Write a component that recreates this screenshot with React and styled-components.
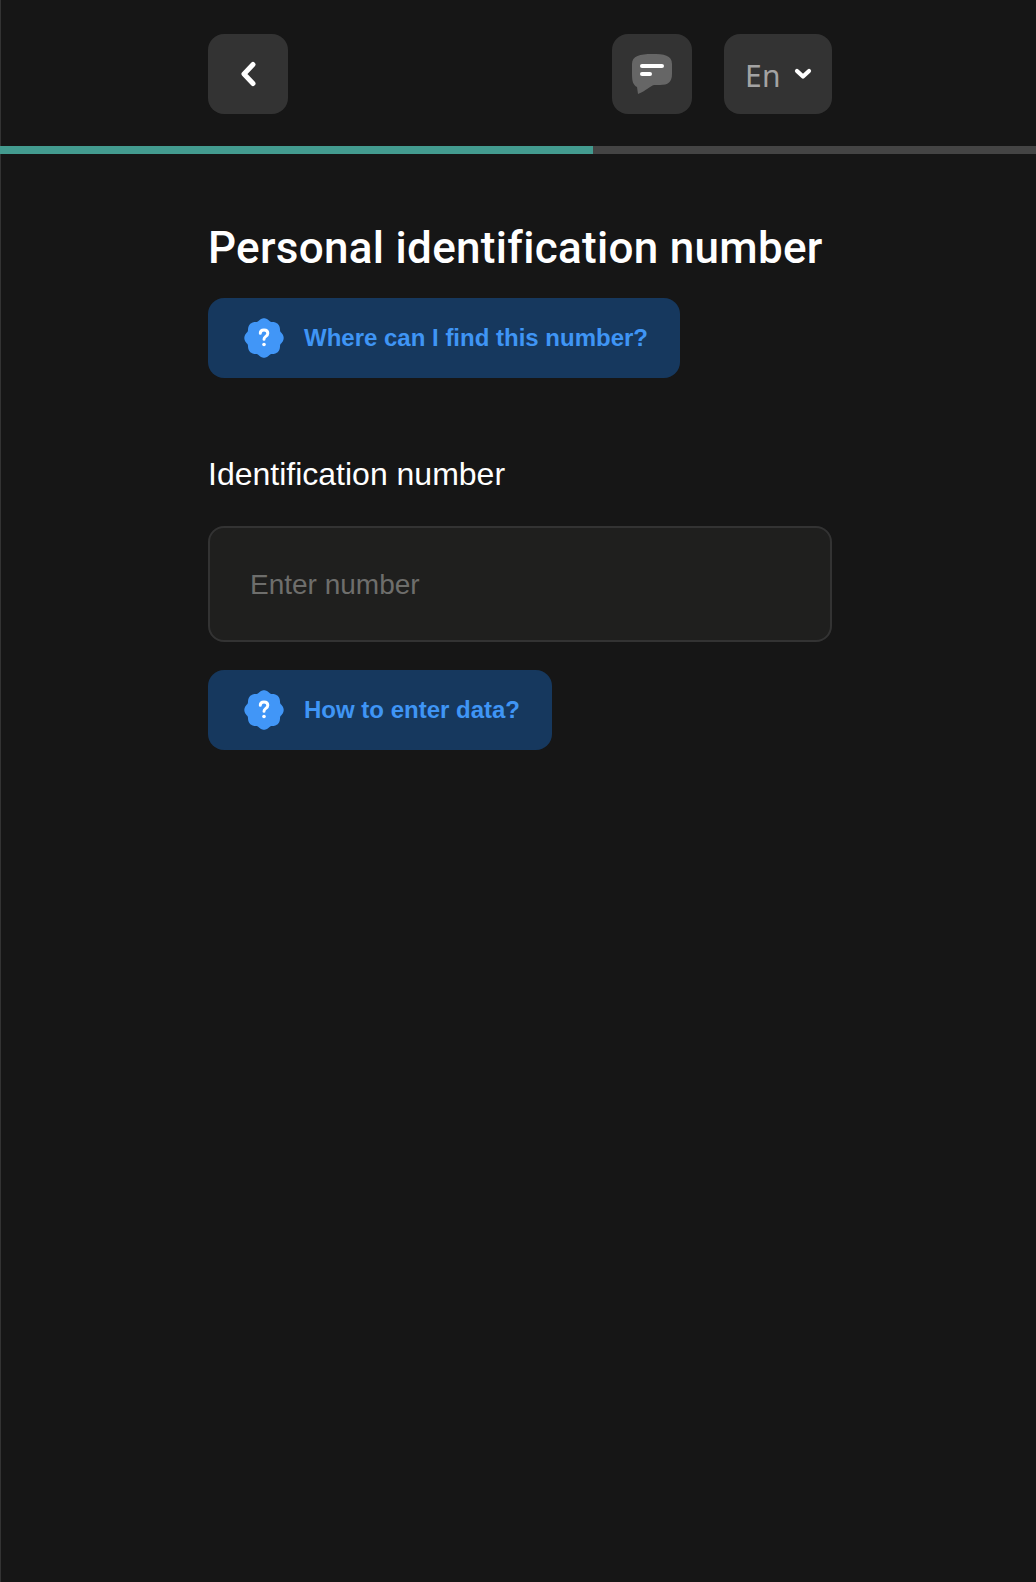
import React from "react";
import styled, { createGlobalStyle } from "styled-components";

const Global = createGlobalStyle`
  html, body { margin: 0; padding: 0; background: #161616; }
  #root { min-height: 1582px; }
  input::placeholder { color: #6e6e6c; opacity: 1; }
`;

const Page = styled.div`
  min-height: 1582px;
  box-sizing: border-box;
  background: #161616;
  border-left: 1px solid #333;
  display: flex;
  flex-direction: column;
`;
const Header = styled.header`
  width: 624px;
  margin-left: 207px;
  padding-top: 34px;
  display: flex;
  align-items: center;
  gap: 32px;
`;
const IconButton = styled.button`
  width: 80px;
  height: 80px;
  border: 0;
  padding: 0;
  border-radius: 16px;
  background: #333333;
  display: flex;
  align-items: center;
  justify-content: center;
`;
const Spacer = styled.div`
  flex: 1;
`;
const LangButton = styled(IconButton)`
  width: 108px;
  gap: 13px;
  padding-left: 1px;
  color: #a3a3a3;
  font-family: "Noto Sans", sans-serif;
  font-size: 30px;
  line-height: 1;
`;
const LangText = styled.span`
  padding-top: 4px;
  letter-spacing: 0.4px;
`;
const Progress = styled.div`
  margin: 32px 0 0 -1px;
  height: 8px;
  background: #444444;
`;
const ProgressFill = styled.div`
  height: 100%;
  background: #439b8f;
`;
const Main = styled.main`
  width: 624px;
  margin-left: 207px;
  display: flex;
  flex-direction: column;
  align-items: flex-start;
`;
const Title = styled.h1`
  margin: 66px 0 0;
  font-family: Roboto, "Noto Sans", sans-serif;
  font-weight: 500;
  font-size: 44px;
  letter-spacing: 0.3px;
  line-height: 56px;
  color: #fff;
  white-space: nowrap;
`;
const Hint = styled.button`
  margin-top: ${(p) => p.$top}px;
  height: 80px;
  border: 0;
  border-radius: 16px;
  background: #16385e;
  padding: 0 32px 0 36px;
  display: flex;
  align-items: center;
  gap: 20px;
  color: #3f95f5;
  font-family: "Liberation Sans", Arial, sans-serif;
  font-weight: 700;
  font-size: 24px;
`;
const Label = styled.label`
  margin-top: 76px;
  font-family: "Liberation Sans", Arial, sans-serif;
  font-size: 32px;
  line-height: 40px;
  color: #fff;
`;
const Field = styled.input`
  margin-top: 32px;
  width: 100%;
  height: 116px;
  box-sizing: border-box;
  border: 2px solid #333333;
  border-radius: 16px;
  background: #1f1f1e;
  padding: 2px 40px 0;
  font-family: "Liberation Sans", Arial, sans-serif;
  font-size: 28px;
  color: #fff;
  outline: none;
`;

function badgePath() {
  const steps = 160;
  const pts = [];
  for (let i = 0; i < steps; i++) {
    const a = (i / steps) * Math.PI * 2 - Math.PI / 2;
    const c = Math.cos(4 * (a + Math.PI / 2));
    const r = 16.9 + 2.7 * Math.sqrt(c * c + 0.06);
    pts.push(`${(20 + r * Math.cos(a)).toFixed(2)} ${(20 + r * Math.sin(a)).toFixed(2)}`);
  }
  return `M${pts.join("L")}Z`;
}

const Badge = () => (
  <svg width="40" height="40" viewBox="0 0 40 40" aria-hidden="true">
    <path d={badgePath()} fill="#4196f7" />
    <path d="M16.300 15.200c0-2 1.500-3.200 3.700-3.200 2.300 0 3.800 1.300 3.800 3.200 0 3.300-3.800 3-3.800 6" fill="none" stroke="#fff" strokeWidth="3" strokeLinecap="round" />
    <circle cx="20" cy="26.500" r="1.800" fill="#fff" />
  </svg>
);

export default function App() {
  return (
    <Page>
      <Global />
      <Header>
        <IconButton aria-label="Back">
          <svg width="20" height="26" viewBox="0 0 20 26">
            <path d="M15 3.500 6 13l9 9.500" fill="none" stroke="#fff" strokeWidth="5" strokeLinecap="round" strokeLinejoin="round" />
          </svg>
        </IconButton>
        <Spacer />
        <IconButton aria-label="Support">
          <svg width="40" height="40" viewBox="0 0 40 40">
            <path d="M20 0C32 0 40 1 40 10v10c0 8-4 11-12 11h-6c-4 1-8 6-16 9l-1-7C1 31 0 27 0 20V10C0 2 8 0 20 0Z" fill="#666666" />
            <rect x="8" y="10" width="24" height="4" rx="2" fill="#fff" />
            <rect x="8" y="18" width="12" height="4" rx="2" fill="#fff" />
          </svg>
        </IconButton>
        <LangButton>
          <LangText>En</LangText>
          <svg width="18" height="12" viewBox="0 0 18 12">
            <path d="M3 3l6 5.500L15 3" fill="none" stroke="#fff" strokeWidth="4.200" strokeLinecap="round" strokeLinejoin="round" />
          </svg>
        </LangButton>
      </Header>
      <Progress>
        <ProgressFill style={{ width: `${(593 / 1036) * 100}%` }} />
      </Progress>
      <Main>
        <Title>Personal identification number</Title>
        <Hint $top={22}>
          <Badge />
          Where can I find this number?
        </Hint>
        <Label>Identification number</Label>
        <Field placeholder="Enter number" />
        <Hint $top={28}>
          <Badge />
          How to enter data?
        </Hint>
      </Main>
    </Page>
  );
}
